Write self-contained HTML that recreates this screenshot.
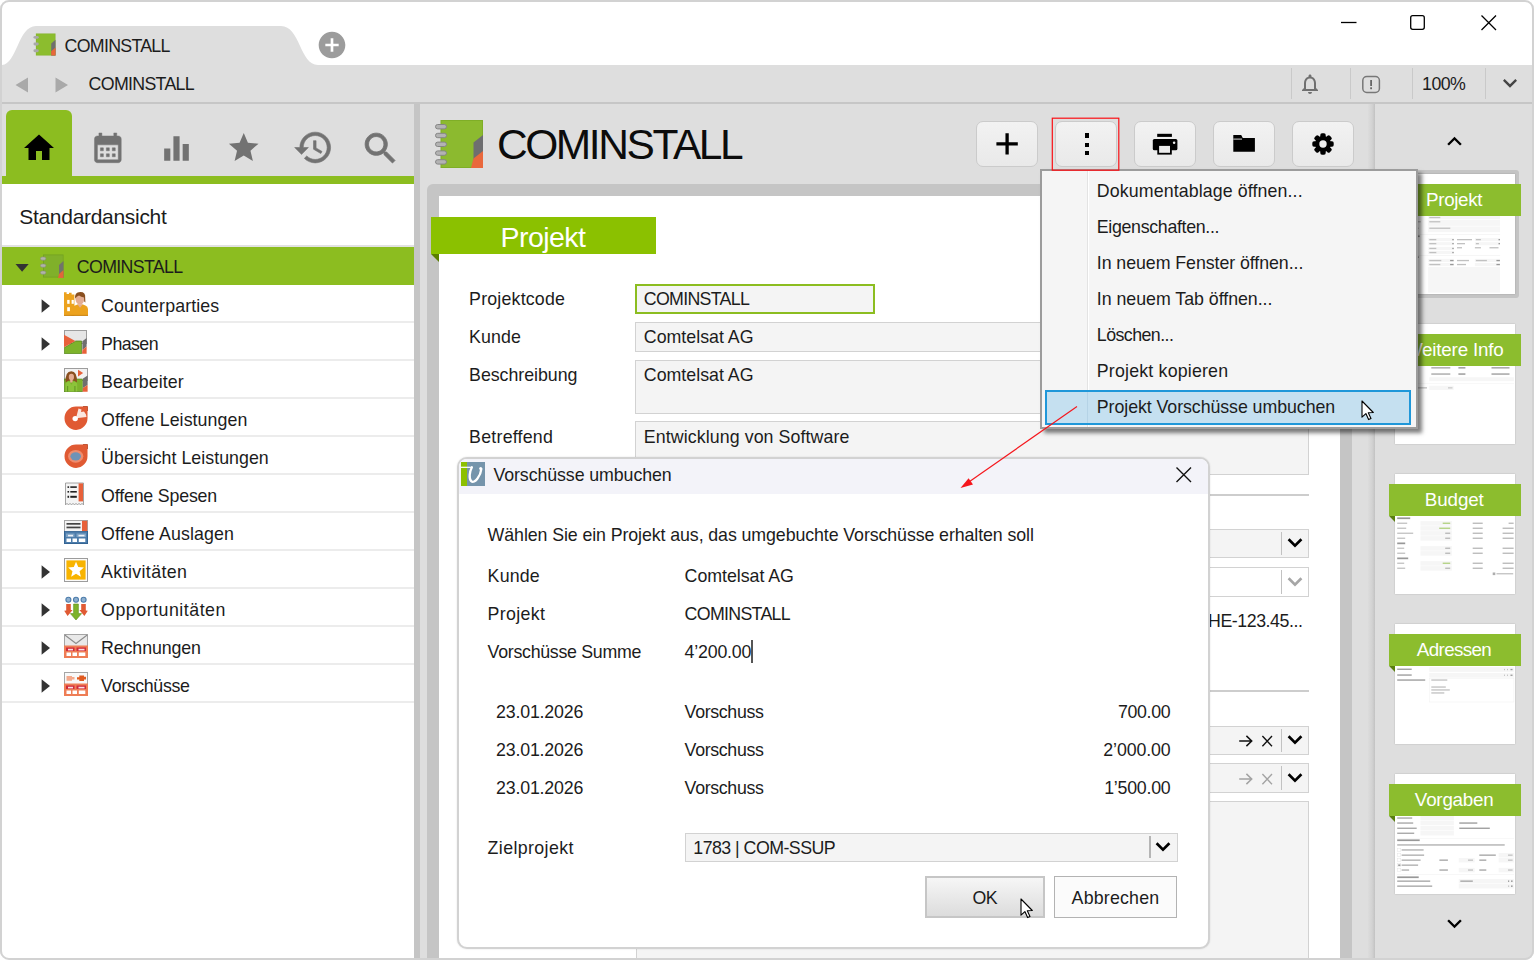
<!DOCTYPE html>
<html lang="de"><head><meta charset="utf-8"><title>COMINSTALL</title>
<style>
html,body{margin:0;padding:0;background:#fff;}
body{width:1534px;height:960px;overflow:hidden;position:relative;font-family:"Liberation Sans", sans-serif;}
#win{position:absolute;left:0;top:0;width:1534px;height:960px;overflow:hidden;}
#win div,#win span.t,#win svg{position:absolute;box-sizing:border-box;}
span.t{white-space:nowrap;font-kerning:normal;}

.fld{background:#f4f4f4;border:1px solid #d2d2d2;}
.sep{background:#ececec;}

</style></head><body><div id="win">
<div style="left:0px;top:0px;width:1534px;height:960px;background:#dedede;border-radius:9px;"></div><div style="left:0px;top:0px;width:1534px;height:65px;background:#fff;border-radius:9px 9px 0 0;"></div><svg style="left:0;top:0" width="400" height="70" viewBox="0 0 400 70"><path fill="#dedede" d="M0,65 L2,65 C17,64 18,26 36,26 L281,26 C300,26 300,65 318,65 L318,66 L0,66 Z"/></svg><svg style="left:33px;top:33px" width="23" height="23" viewBox="0 0 48 48">
<rect x="6" y="1" width="41" height="46" fill="#86b52b"/><rect x="7.5" y="2.5" width="38" height="43" fill="#8cbd2e"/>
<polygon points="47,14 38,22 38,47 47,47" fill="#6f6f6f"/><polygon points="47,30 38,38 38,47 47,47" fill="#e8673a"/>
<rect x="1" y="6" width="11" height="6" rx="3" fill="#a9a9a9"/><rect x="1" y="20" width="11" height="6" rx="3" fill="#a9a9a9"/><rect x="1" y="34" width="11" height="6" rx="3" fill="#a9a9a9"/>
</svg><span id="t0" class="t" style="left:64.61px;top:37.73px;font-size:17.8px;line-height:17.8px;color:#1c1c1c;letter-spacing:-0.726px;">COMINSTALL</span><svg style="left:315.8px;top:29.2px;" width="32" height="32" viewBox="0 0 24 24"><path fill="#9c9c9c" d="M12 2C6.48 2 2 6.48 2 12s4.48 10 10 10 10-4.48 10-10S17.52 2 12 2zm5 11h-4v4h-2v-4H7v-2h4V7h2v4h4v2z"/></svg><svg style="left:1330px;top:8px" width="180" height="30" viewBox="0 0 180 30" fill="none" stroke="#000" stroke-width="1.3"><path d="M11,14.5 H26.5"/><rect x="80.7" y="7.7" width="13.6" height="13.6" rx="2"/><path d="M151.5,7.5 L166,22 M166,7.5 L151.5,22"/></svg><svg style="left:10px;top:72px" width="70" height="26" viewBox="0 0 70 26"><path fill="#a9a9a9" d="M18,5.5 L18,20.5 L5.5,13 Z M45.5,5.5 L45.5,20.5 L58,13 Z"/></svg><span id="t1" class="t" style="left:88.61px;top:75.83px;font-size:17.8px;line-height:17.8px;color:#1c1c1c;letter-spacing:-0.693px;">COMINSTALL</span><div style="left:1291px;top:68px;width:1.3px;height:31px;background:#c9c9c9;"></div><div style="left:1350px;top:68px;width:1.3px;height:31px;background:#c9c9c9;"></div><div style="left:1412px;top:68px;width:1.3px;height:31px;background:#c9c9c9;"></div><div style="left:1485px;top:68px;width:1.3px;height:31px;background:#c9c9c9;"></div><svg style="left:1297.6px;top:72px;" width="24" height="24" viewBox="0 0 24 24"><path fill="#707070" d="M12 22c1.1 0 2-.9 2-2h-4c0 1.1.9 2 2 2zm6-6v-5c0-3.07-1.63-5.64-4.5-6.32V4c0-.83-.67-1.5-1.5-1.5s-1.5.67-1.5 1.5v.68C7.64 5.36 6 7.92 6 11v5l-2 2v1h16v-1l-2-2zm-2 1H8v-6c0-2.48 1.51-4.5 4-4.5s4 2.02 4 4.5v6z"/></svg><svg style="left:1360px;top:73px" width="22" height="22" viewBox="0 0 22 22"><rect x="2.8" y="3.5" width="16.6" height="16" rx="4" fill="none" stroke="#777" stroke-width="1.5"/><rect x="10.2" y="7" width="1.8" height="6" fill="#666"/><rect x="10.2" y="14.3" width="1.8" height="1.9" fill="#666"/></svg><span id="t2" class="t" style="left:1422.11px;top:76.13px;font-size:17.8px;line-height:17.8px;color:#1c1c1c;letter-spacing:-0.568px;">100%</span><svg style="left:1495.6px;top:69px;" width="28" height="28" viewBox="0 0 24 24"><path fill="#444" d="M7.41 8.59L12 13.17l4.59-4.58L18 10l-6 6-6-6 1.41-1.41z"/></svg><div style="left:0px;top:102px;width:1534px;height:2px;background:#c6c6c6;"></div><div style="left:2px;top:184px;width:412px;height:776px;background:#fff;"></div><div style="left:6px;top:110px;width:66px;height:70px;background:#8cbd20;border-radius:6px 6px 0 0;"></div><div style="left:2px;top:176px;width:412px;height:8px;background:#8cbd20;"></div><svg style="left:21px;top:130.2px;" width="36" height="36" viewBox="0 0 24 24"><path fill="#000" d="M10 20v-6h4v6h5v-8h3L12 3 2 12h3v8z"/></svg><svg style="left:90.3px;top:130px;stroke:#727272;stroke-width:.3;" width="35.7" height="35.7" viewBox="0 0 24 24"><path fill="#727272" d="M19 4h-1V2h-2v2H8V2H6v2H5c-1.11 0-1.99.9-1.99 2L3 20c0 1.1.89 2 2 2h14c1.1 0 2-.9 2-2V6c0-1.1-.9-2-2-2zm0 16H5V10h14v10zM9 14H7v-2h2v2zm4 0h-2v-2h2v2zm4 0h-2v-2h2v2zm-8 4H7v-2h2v2zm4 0h-2v-2h2v2zm4 0h-2v-2h2v2z"/></svg><svg style="left:157.5px;top:129.5px;" width="37" height="37" viewBox="0 0 24 24"><path fill="#727272" d="M10 20h4V4h-4v16zm-6 0h4v-8H4v8zM16 9v11h4V9h-4z"/></svg><svg style="left:226.3px;top:130.4px;" width="35.5" height="35.5" viewBox="0 0 24 24"><path fill="#727272" d="M12 17.27L18.18 21l-1.64-7.03L22 9.24l-7.19-.61L12 2 9.19 8.63 2 9.24l5.46 4.73L5.82 21z"/></svg><svg style="left:292.5px;top:127.1px;stroke:#727272;stroke-width:.35;" width="41" height="41" viewBox="0 0 24 24"><path fill="#727272" d="M13 3c-4.97 0-9 4.03-9 9H1l3.89 3.89.07.14L9 12H6c0-3.87 3.13-7 7-7s7 3.13 7 7-3.13 7-7 7c-1.93 0-3.68-.79-4.94-2.06l-1.42 1.42C8.27 19.99 10.51 21 13 21c4.97 0 9-4.03 9-9s-4.03-9-9-9zm-1 5v5l4.28 2.54.72-1.21-3.5-2.08V8H12z"/></svg><svg style="left:359.5px;top:128.4px;stroke:#727272;stroke-width:.5;" width="41" height="41" viewBox="0 0 24 24"><path fill="#727272" d="M15.5 14h-.79l-.28-.27C15.41 12.59 16 11.11 16 9.5 16 5.91 13.09 3 9.5 3S3 5.91 3 9.5 5.91 16 9.5 16c1.61 0 3.09-.59 4.23-1.57l.27.28v.79l5 4.99L20.49 19l-4.99-5zm-6 0C7.01 14 5 11.99 5 9.5S7.01 5 9.5 5 14 7.01 14 9.5 11.99 14 9.5 14z"/></svg><span id="t3" class="t" style="left:19.25px;top:206.42px;font-size:21px;line-height:21px;color:#1c1c1c;letter-spacing:-0.299px;">Standardansicht</span><div style="left:2px;top:245px;width:412px;height:2px;background:#e2e2e2;"></div><div style="left:2px;top:247px;width:412px;height:38px;background:#8cbd20;"></div><svg style="left:14px;top:262px" width="16" height="12" viewBox="0 0 16 12"><path fill="#333" d="M1.5,2 L14.7,2 L8.1,9.8 Z"/></svg><span id="t4" class="t" style="left:76.81px;top:259.33px;font-size:17.8px;line-height:17.8px;color:#1c1c1c;letter-spacing:-0.670px;">COMINSTALL</span><div class="sep" style="left:2px;top:321px;width:412px;height:2px;"></div><span id="t5" class="t" style="left:101.11px;top:297.93px;font-size:17.8px;line-height:17.8px;color:#1c1c1c;letter-spacing:0.111px;">Counterparties</span><svg style="left:40px;top:298px" width="12" height="16" viewBox="0 0 12 16"><path fill="#333" d="M1.6,1.3 L10,8 L1.6,14.7 Z"/></svg><div class="sep" style="left:2px;top:359px;width:412px;height:2px;"></div><span id="t6" class="t" style="left:101.11px;top:335.93px;font-size:17.8px;line-height:17.8px;color:#1c1c1c;letter-spacing:-0.566px;">Phasen</span><svg style="left:40px;top:336px" width="12" height="16" viewBox="0 0 12 16"><path fill="#333" d="M1.6,1.3 L10,8 L1.6,14.7 Z"/></svg><div class="sep" style="left:2px;top:397px;width:412px;height:2px;"></div><span id="t7" class="t" style="left:101.11px;top:373.93px;font-size:17.8px;line-height:17.8px;color:#1c1c1c;letter-spacing:0.048px;">Bearbeiter</span><div class="sep" style="left:2px;top:435px;width:412px;height:2px;"></div><span id="t8" class="t" style="left:101.11px;top:411.93px;font-size:17.8px;line-height:17.8px;color:#1c1c1c;letter-spacing:0.079px;">Offene Leistungen</span><div class="sep" style="left:2px;top:473px;width:412px;height:2px;"></div><span id="t9" class="t" style="left:101.11px;top:449.93px;font-size:17.8px;line-height:17.8px;color:#1c1c1c;letter-spacing:0.028px;">Übersicht Leistungen</span><div class="sep" style="left:2px;top:511px;width:412px;height:2px;"></div><span id="t10" class="t" style="left:101.11px;top:487.93px;font-size:17.8px;line-height:17.8px;color:#1c1c1c;letter-spacing:-0.186px;">Offene Spesen</span><div class="sep" style="left:2px;top:549px;width:412px;height:2px;"></div><span id="t11" class="t" style="left:101.11px;top:525.93px;font-size:17.8px;line-height:17.8px;color:#1c1c1c;letter-spacing:0.115px;">Offene Auslagen</span><div class="sep" style="left:2px;top:587px;width:412px;height:2px;"></div><span id="t12" class="t" style="left:101.11px;top:563.93px;font-size:17.8px;line-height:17.8px;color:#1c1c1c;letter-spacing:0.375px;">Aktivitäten</span><svg style="left:40px;top:564px" width="12" height="16" viewBox="0 0 12 16"><path fill="#333" d="M1.6,1.3 L10,8 L1.6,14.7 Z"/></svg><div class="sep" style="left:2px;top:625px;width:412px;height:2px;"></div><span id="t13" class="t" style="left:101.11px;top:601.93px;font-size:17.8px;line-height:17.8px;color:#1c1c1c;letter-spacing:0.511px;">Opportunitäten</span><svg style="left:40px;top:602px" width="12" height="16" viewBox="0 0 12 16"><path fill="#333" d="M1.6,1.3 L10,8 L1.6,14.7 Z"/></svg><div class="sep" style="left:2px;top:663px;width:412px;height:2px;"></div><span id="t14" class="t" style="left:101.11px;top:639.93px;font-size:17.8px;line-height:17.8px;color:#1c1c1c;letter-spacing:-0.120px;">Rechnungen</span><svg style="left:40px;top:640px" width="12" height="16" viewBox="0 0 12 16"><path fill="#333" d="M1.6,1.3 L10,8 L1.6,14.7 Z"/></svg><div class="sep" style="left:2px;top:701px;width:412px;height:2px;"></div><span id="t15" class="t" style="left:101.11px;top:677.93px;font-size:17.8px;line-height:17.8px;color:#1c1c1c;letter-spacing:-0.349px;">Vorschüsse</span><svg style="left:40px;top:678px" width="12" height="16" viewBox="0 0 12 16"><path fill="#333" d="M1.6,1.3 L10,8 L1.6,14.7 Z"/></svg><svg style="left:40px;top:254.2px;opacity:.93;" width="24" height="24" viewBox="0 0 24 24"><rect x="3" y="0.5" width="20.5" height="23" fill="#6f9e22"/><rect x="3.8" y="1.3" width="19" height="21.4" fill="#80b02b"/><polygon points="23.5,7 19,11 19,24 23.5,24" fill="#6f6f70"/><polygon points="23.5,16 19,20 18,24 23.5,24" fill="#e8613a"/><g fill="#b4b4b4" stroke="#8a8a8a" stroke-width=".6"><rect x=".4" y="3" width="5.4" height="3.2" rx="1.6"/><rect x=".4" y="10" width="5.4" height="3.2" rx="1.6"/><rect x=".4" y="17" width="5.4" height="3.2" rx="1.6"/></g></svg><svg style="left:64px;top:292px;" width="24" height="24" viewBox="0 0 24 24"><path d="M0,23.7 V0.3 H2.6 V1.9 H5 V0.8 H7.6 V2.4 H10.4 V23.7 Z" fill="#eca21e"/><rect x="3.2" y="7.9" width="2.4" height="3.9" fill="#fff"/><rect x="7.6" y="7.9" width="2.2" height="3.9" fill="#fff"/><rect x="3.2" y="15.2" width="2.7" height="4" fill="#fff"/><path d="M7.5,23.7 V17 Q7.8,14.2 11,13.6 L13.4,12.6 H19 L21.4,13.6 Q23.8,14.4 24,17 V23.7 Z" fill="#eca21e"/><ellipse cx="15.9" cy="7.3" rx="4.4" ry="5.3" fill="#e4ad93"/><path d="M13.2,12 L16,15.8 L19,12 Q16,13.6 13.2,12Z" fill="#e4ad93"/><path d="M11.2,6.8 Q10.2,0.2 16.2,0.1 Q21.8,0 21.2,6 L21.4,10.5 L20.2,9.5 L20,5.6 Q17,4.6 15,3.4 Q12.3,4.2 11.2,6.8Z" fill="#8a4f1f"/><path d="M0,23.4 H24" stroke="#c27a0c" stroke-width=".8"/></svg><svg style="left:64px;top:330px;" width="24" height="24" viewBox="0 0 24 24"><rect x=".5" y=".5" width="22" height="13" fill="#e6e6e6" stroke="#9d9d9d"/><polygon points="0.3,17.6 11.8,11 17.6,11 17.6,23.7 0.3,23.7" fill="#7db32b" stroke="#4f7f17" stroke-width=".7"/><polygon points="0,4.8 11.3,11 0,17.2" fill="#e8613a"/><polygon points="18.4,11.2 22.6,8 22.6,16.6 18.4,20" fill="#6f6f70"/><polygon points="18.4,20 22.6,16.6 22.6,23.8 18,23.8" fill="#e8613a"/></svg><svg style="left:64px;top:368px;" width="24" height="24" viewBox="0 0 24 24"><rect x=".5" y=".5" width="23" height="12" fill="#f2f2f2" stroke="#9d9d9d"/><polygon points="14,1.7 19.2,5.1 14,8.5" fill="#e8613a"/><rect x="0.3" y="11" width="18" height="12.7" fill="#7db32b" stroke="#4f7f17" stroke-width=".6"/><polygon points="19,10.5 23.6,7.6 23.6,17 19,20" fill="#6f6f70"/><polygon points="19,20 23.6,17 23.6,23.8 18.6,23.8" fill="#e8613a"/><path d="M1.6,14.5 Q1,3.2 7.3,3.2 Q13.4,3.2 12.9,14.5 Q10,12 7.3,12.6 Q4.5,12 1.6,14.5Z" fill="#8a4f1f"/><ellipse cx="7.4" cy="9" rx="2.6" ry="3.3" fill="#e4ad93"/><rect x="6.2" y="11.5" width="2.4" height="3" fill="#e4ad93"/><path d="M1.5,23.5 V16.6 Q1.8,14 5.2,13.6 L7.4,16.8 L9.6,13.6 Q13,14 13.2,16.6 V23.5 Z" fill="#8cc43a"/><rect x="3.4" y="18" width=".7" height="5.6" fill="#4f7f17"/><rect x="10.6" y="18" width=".7" height="5.6" fill="#4f7f17"/></svg><svg style="left:64px;top:406px;" width="24" height="24" viewBox="0 0 24 24"><path d="M12,.5 H23.5 V12 A11.5,11.7 0 1 1 12,.5Z" fill="#e05a33"/><path d="M12,12.2 L14.5,2.5 L17.5,3.5 L17,6 L20,5.5 L22,8.5 L22.5,11 Z" fill="#fbe6de"/><circle cx="11.2" cy="12.6" r="2.7" fill="#fff"/><path d="M19,.5 H23.5 V5" fill="none" stroke="#b6401d" stroke-width=".8"/></svg><svg style="left:64px;top:444px;" width="24" height="24" viewBox="0 0 24 24"><path d="M12,.5 H23.5 V12 A11.5,11.7 0 1 1 12,.5Z" fill="#e05a33"/><ellipse cx="11.7" cy="12.3" rx="7.6" ry="6.4" fill="#ef8c6d"/><ellipse cx="11.7" cy="12.3" rx="5.3" ry="4.1" fill="#6f93b6"/><path d="M19,.5 H23.5 V5" fill="none" stroke="#b6401d" stroke-width=".8"/></svg><svg style="left:64px;top:482px;" width="24" height="24" viewBox="0 0 24 24"><path d="M1.5,1 H19.5 V23 L18,21.3 L16.5,23 L15,21.3 L13.5,23 L12,21.3 L10.5,23 L9,21.3 L7.5,23 L6,21.3 L4.5,23 L3,21.3 L1.5,23 Z" fill="#f4f4f4" stroke="#9a9a9a" stroke-width=".9"/><rect x="14.6" y="1.4" width="4.4" height="18" fill="#e8613a"/><g fill="#222"><rect x="3.5" y="4.3" width="1.6" height="1.6"/><rect x="6.3" y="4.3" width="6.5" height="1.6"/><rect x="3.5" y="9" width="1.6" height="1.6"/><rect x="6.3" y="9" width="6.5" height="1.6"/><rect x="3.5" y="13.8" width="1.6" height="2"/><rect x="6.3" y="13.8" width="6.5" height="2"/></g></svg><svg style="left:64px;top:520px;" width="24" height="24" viewBox="0 0 24 24"><rect x=".5" y=".5" width="23" height="12" fill="#f4f4f4" stroke="#a5a5a5"/><rect x="18" y=".8" width="5.2" height="10.5" fill="#e8613a"/><rect x="2.5" y="3" width="14" height="1.7" fill="#444"/><rect x="2.5" y="6.6" width="14" height="1.7" fill="#444"/><rect x="0" y="11.5" width="24" height="12.5" fill="#4c7cab"/><rect x="2" y="13.5" width="8.5" height="3.5" fill="#7ea3c6"/><rect x="12.5" y="13.5" width="9.5" height="3.5" fill="#7ea3c6"/><rect x="4" y="14.8" width="5" height="1.6" fill="#fff" opacity=".85"/><rect x="14.5" y="14.8" width="6" height="1.6" fill="#fff" opacity=".85"/><rect x="2.5" y="18.5" width="4.5" height="3.5" fill="#fff"/><rect x="8.5" y="18.5" width="4.5" height="3.5" fill="#fff"/><rect x="14.8" y="18.5" width="6.5" height="3.5" fill="#fff"/><rect x=".4" y="11.5" width="23.2" height="12.1" fill="none" stroke="#2f5f8f" stroke-width=".8"/></svg><svg style="left:64px;top:558px;" width="24" height="24" viewBox="0 0 24 24"><rect x=".5" y=".5" width="23" height="23" fill="#fafafa" stroke="#9c9c9c"/><rect x="2.4" y="2.4" width="19.2" height="19.2" fill="#f8b400"/><path transform="translate(2.6,2.2) scale(.785)" fill="#fff" d="M12 17.27L18.18 21l-1.64-7.03L22 9.24l-7.19-.61L12 2 9.19 8.63 2 9.24l5.46 4.73L5.82 21z"/></svg><svg style="left:64px;top:596px;" width="24" height="24" viewBox="0 0 24 24"><g fill="#8fb0cf" stroke="#4c7cab" stroke-width="1.1"><circle cx="4.4" cy="3.8" r="2.5"/><circle cx="12" cy="3.8" r="2.5"/><circle cx="19.6" cy="3.8" r="2.5"/></g><path d="M2.2,8 H6.8 V14 H8.6 L3.6,20 L.2,14.8 L2.2,14.5 Z" fill="#e05a33"/><path d="M21.8,8 H17.2 V14 H15.4 L20.4,20 L23.8,14.8 L21.8,14.5 Z" fill="#e05a33"/><path d="M9.6,8 H14.4 V17.6 H17.6 L12,24 L6.4,17.6 H9.6 Z" fill="#7db32b" stroke="#5f8f1c" stroke-width=".6"/></svg><svg style="left:64px;top:634px;" width="24" height="24" viewBox="0 0 24 24"><rect x=".5" y=".5" width="23" height="12" fill="#e9e9e9" stroke="#a5a5a5"/><path d="M.8,1 L12,9.5 L23.2,1" fill="none" stroke="#8c8c8c" stroke-width="1.1"/><rect x="0" y="11.5" width="24" height="12.5" fill="#ee7d55"/><rect x="2" y="13.5" width="8.5" height="3.5" fill="#d12a3a"/><rect x="12.5" y="13.5" width="9.5" height="3.5" fill="#d12a3a"/><rect x="4" y="14.8" width="5" height="1.6" fill="#fff" opacity=".85"/><rect x="14.5" y="14.8" width="6" height="1.6" fill="#fff" opacity=".85"/><rect x="2.5" y="18.5" width="4.5" height="3.5" fill="#fff"/><rect x="8.5" y="18.5" width="4.5" height="3.5" fill="#fff"/><rect x="14.8" y="18.5" width="6.5" height="3.5" fill="#fff"/></svg><svg style="left:64px;top:672px;" width="24" height="24" viewBox="0 0 24 24"><rect x=".5" y=".5" width="23" height="12" fill="#f8f8f8" stroke="#a5a5a5"/><path d="M2.5,4 H8 V5 H10.5 V7.5 H8 V8.7 H2.5 Z" fill="#f3a98c"/><path d="M13,5.3 H15.3 V3.6 H20 V4.8 H22 V7.6 H20 V8.9 H15.3 V7.4 H13 Z" fill="#e05a1f"/><rect x="0" y="11.5" width="24" height="12.5" fill="#ee7d55"/><rect x="2" y="13.5" width="8.5" height="3.5" fill="#d12a3a"/><rect x="12.5" y="13.5" width="9.5" height="3.5" fill="#d12a3a"/><rect x="4" y="14.8" width="5" height="1.6" fill="#fff" opacity=".85"/><rect x="14.5" y="14.8" width="6" height="1.6" fill="#fff" opacity=".85"/><rect x="2.5" y="18.5" width="4.5" height="3.5" fill="#fff"/><rect x="8.5" y="18.5" width="4.5" height="3.5" fill="#fff"/><rect x="14.8" y="18.5" width="6.5" height="3.5" fill="#fff"/></svg><div style="left:414px;top:104px;width:6px;height:856px;background:#c5c5c5;"></div><svg style="left:434px;top:119px" width="50" height="50" viewBox="0 0 50 50">
<rect x="6.5" y="1" width="42.5" height="48" fill="#7fae27"/><rect x="7.5" y="2" width="40.5" height="46" fill="#8cba2f"/>
<polygon points="49,16 39.5,23.5 39.5,49 49,49" fill="#6e6e70"/><polygon points="49,32 39.5,39.5 37,49 49,49" fill="#e9683c"/>
<g fill="#b3b3b3" stroke="#858585" stroke-width="1"><rect x="1.5" y="5.5" width="11" height="4.4" rx="2.2"/><rect x="1.5" y="14.3" width="11" height="4.4" rx="2.2"/><rect x="1.5" y="23.1" width="11" height="4.4" rx="2.2"/><rect x="1.5" y="31.9" width="11" height="4.4" rx="2.2"/><rect x="1.5" y="40.7" width="11" height="4.4" rx="2.2"/></g>
</svg><span id="t16" class="t" style="left:496.88px;top:124.32px;font-size:42.5px;line-height:42.5px;color:#0c0c0c;letter-spacing:-2.399px;">COMINSTALL</span><div style="left:975.6px;top:120.6px;width:62.6px;height:46.4px;background:linear-gradient(#f2f2f2,#e9e9e9);border:1.5px solid #cbcbcb;border-radius:7px;"></div><div style="left:1054.6px;top:120.6px;width:62.6px;height:46.4px;background:linear-gradient(#f2f2f2,#e9e9e9);border:1.5px solid #cbcbcb;border-radius:7px;"></div><div style="left:1133.6px;top:120.6px;width:62.6px;height:46.4px;background:linear-gradient(#f2f2f2,#e9e9e9);border:1.5px solid #cbcbcb;border-radius:7px;"></div><div style="left:1212.6px;top:120.6px;width:62.6px;height:46.4px;background:linear-gradient(#f2f2f2,#e9e9e9);border:1.5px solid #cbcbcb;border-radius:7px;"></div><div style="left:1291.6px;top:120.6px;width:62.6px;height:46.4px;background:linear-gradient(#f2f2f2,#e9e9e9);border:1.5px solid #cbcbcb;border-radius:7px;"></div><svg style="left:990px;top:127px" width="34" height="34" viewBox="0 0 34 34"><path d="M6.4,16.9 H27.8 M17.1,6.2 V27.6" stroke="#000" stroke-width="3.3" fill="none"/></svg><div style="left:1084.8px;top:133.2px;width:4.5px;height:4.4px;background:#000;"></div><div style="left:1084.8px;top:142.8px;width:4.5px;height:4.4px;background:#000;"></div><div style="left:1084.8px;top:151px;width:4.5px;height:4.4px;background:#000;"></div><svg style="left:1150px;top:130px" width="30" height="28" viewBox="0 0 30 28"><rect x="7.2" y="3.8" width="14.7" height="3.1"/><rect x="2.8" y="9" width="24.6" height="11.3" rx="1.6"/><rect x="7.3" y="14.2" width="14.5" height="10.4"/><rect x="9.1" y="15.9" width="10.9" height="6.9" fill="#ededed"/><circle cx="24.1" cy="12.8" r="1.25" fill="#ededed"/></svg><svg style="left:1230px;top:132px" width="28" height="22" viewBox="0 0 28 22"><path d="M3.3,3 H11.2 L12.8,5.9 H24.9 V19.8 H3.3 Z"/><path d="M3.3,7.1 H12" stroke="#ededed" stroke-width=".9"/></svg><svg style="left:1311px;top:132px" width="24" height="24" viewBox="-12 -12 24 24"><rect x="-2.7" y="-10.7" width="5.4" height="7" rx="1.7" transform="rotate(0)"/><rect x="-2.7" y="-10.7" width="5.4" height="7" rx="1.7" transform="rotate(45)"/><rect x="-2.7" y="-10.7" width="5.4" height="7" rx="1.7" transform="rotate(90)"/><rect x="-2.7" y="-10.7" width="5.4" height="7" rx="1.7" transform="rotate(135)"/><rect x="-2.7" y="-10.7" width="5.4" height="7" rx="1.7" transform="rotate(180)"/><rect x="-2.7" y="-10.7" width="5.4" height="7" rx="1.7" transform="rotate(225)"/><rect x="-2.7" y="-10.7" width="5.4" height="7" rx="1.7" transform="rotate(270)"/><rect x="-2.7" y="-10.7" width="5.4" height="7" rx="1.7" transform="rotate(315)"/><circle r="7.9"/><circle r="3.7" fill="#ededed"/></svg><div style="left:427px;top:184px;width:925px;height:776px;background:#c5c5c5;border-radius:6px 0 0 0;"></div><div style="left:439px;top:196px;width:901px;height:764px;background:#fff;"></div><div style="left:1368px;top:104px;width:7px;height:856px;background:linear-gradient(90deg,#dcdcdc 0,#d2d2d2 60%,#c2c2c2 100%);"></div><div style="left:431.4px;top:217px;width:224.8px;height:37px;background:#8bc100;"></div><svg style="left:431px;top:254px" width="8" height="8" viewBox="0 0 8 8"><path fill="#5a7f00" d="M0,0 H8 V8 Z"/></svg><span id="t17" class="t" style="left:500.57px;top:223.17px;font-size:28.5px;line-height:28.5px;color:#fff;letter-spacing:-0.576px;">Projekt</span><span id="t18" class="t" style="left:469.11px;top:291.33px;font-size:17.8px;line-height:17.8px;color:#1c1c1c;letter-spacing:0.187px;">Projektcode</span><span id="t19" class="t" style="left:469.11px;top:329.43px;font-size:17.8px;line-height:17.8px;color:#1c1c1c;letter-spacing:0.090px;">Kunde</span><span id="t20" class="t" style="left:469.11px;top:367.33px;font-size:17.8px;line-height:17.8px;color:#1c1c1c;letter-spacing:-0.043px;">Beschreibung</span><span id="t21" class="t" style="left:469.11px;top:428.63px;font-size:17.8px;line-height:17.8px;color:#1c1c1c;letter-spacing:0.227px;">Betreffend</span><div style="left:635px;top:284px;width:240px;height:30px;background:#f4f4f4;border:2px solid #8cbd20;"></div><div class="fld" style="left:635px;top:322px;width:674px;height:30px;"></div><div class="fld" style="left:635px;top:360px;width:674px;height:54px;"></div><div class="fld" style="left:635px;top:421px;width:674px;height:53.6px;"></div><span id="t22" class="t" style="left:643.81px;top:291.33px;font-size:17.8px;line-height:17.8px;color:#1c1c1c;letter-spacing:-0.693px;">COMINSTALL</span><span id="t23" class="t" style="left:643.81px;top:329.43px;font-size:17.8px;line-height:17.8px;color:#1c1c1c;letter-spacing:0.007px;">Comtelsat AG</span><span id="t24" class="t" style="left:643.81px;top:367.33px;font-size:17.8px;line-height:17.8px;color:#1c1c1c;letter-spacing:0.007px;">Comtelsat AG</span><span id="t25" class="t" style="left:643.81px;top:428.63px;font-size:17.8px;line-height:17.8px;color:#1c1c1c;letter-spacing:0.086px;">Entwicklung von Software</span><div style="left:470px;top:494.2px;width:839px;height:1.7px;background:#cdcdcd;"></div><div style="left:470px;top:690.2px;width:839px;height:1.7px;background:#cdcdcd;"></div><div class="fld" style="left:1073px;top:529.3px;width:236px;height:29px;"></div><div style="left:1280.5px;top:532.3px;width:1.5px;height:23px;background:#c2c2c2;"></div><svg style="left:1285.5px;top:536.4px" width="18" height="14" viewBox="0 0 18 14"><path d="M2.6,3.2 L9,9.6 L15.4,3.2" fill="none" stroke="#000" stroke-width="2.7" stroke-linejoin="miter"/></svg><div class="fld" style="left:1073px;top:567.3px;width:236px;height:29.5px;background:#fff;"></div><div style="left:1280.5px;top:570.3px;width:1.5px;height:23.5px;background:#c2c2c2;"></div><svg style="left:1285.5px;top:574.65px" width="18" height="14" viewBox="0 0 18 14"><path d="M2.6,3.2 L9,9.6 L15.4,3.2" fill="none" stroke="#a6a6a6" stroke-width="2.7" stroke-linejoin="miter"/></svg><span id="t26" class="t" style="left:1195.61px;top:612.63px;font-size:17.8px;line-height:17.8px;color:#1c1c1c;letter-spacing:-0.449px;">CHE-123.45...</span><div class="fld" style="left:1073px;top:725.5px;width:236px;height:29.2px;"></div><div style="left:1280.5px;top:728.5px;width:1.5px;height:23.2px;background:#c2c2c2;"></div><svg style="left:1285.5px;top:732.7px" width="18" height="14" viewBox="0 0 18 14"><path d="M2.6,3.2 L9,9.6 L15.4,3.2" fill="none" stroke="#000" stroke-width="2.7" stroke-linejoin="miter"/></svg><svg style="left:1236px;top:732.6px" width="40" height="16" viewBox="0 0 40 16" fill="none" stroke="#111" stroke-width="1.5"><path d="M3.2,8 H15.6 M10.4,2.9 L15.7,8 L10.4,13.1"/><path d="M26.4,3 L36,13.3 M36,3 L26.4,13.3" stroke-width="1.35"/></svg><div class="fld" style="left:1073px;top:763.4px;width:236px;height:29.2px;"></div><div style="left:1280.5px;top:766.4px;width:1.5px;height:23.2px;background:#c2c2c2;"></div><svg style="left:1285.5px;top:770.6px" width="18" height="14" viewBox="0 0 18 14"><path d="M2.6,3.2 L9,9.6 L15.4,3.2" fill="none" stroke="#000" stroke-width="2.7" stroke-linejoin="miter"/></svg><svg style="left:1236px;top:770.5px" width="40" height="16" viewBox="0 0 40 16" fill="none" stroke="#a3a3a3" stroke-width="1.5"><path d="M3.2,8 H15.6 M10.4,2.9 L15.7,8 L10.4,13.1"/><path d="M26.4,3 L36,13.3 M36,3 L26.4,13.3" stroke-width="1.35"/></svg><div class="fld" style="left:636px;top:801.4px;width:673px;height:170px;"></div><svg style="left:1439.5px;top:127px;" width="29" height="29" viewBox="0 0 24 24"><path fill="#000" d="M7.41 15.41L12 10.83l4.59 4.58L18 14l-6-6-6 6z"/></svg><svg style="left:1439.5px;top:909.2px;" width="29" height="29" viewBox="0 0 24 24"><path fill="#000" d="M7.41 8.59L12 13.17l4.59-4.58L18 10l-6 6-6-6 1.41-1.41z"/></svg><div style="left:1391px;top:170px;width:128px;height:128px;background:#c4c4c4;border-radius:3px;"></div><div style="left:1395px;top:174px;width:120px;height:120px;background:#fff;box-shadow:0 0 1.5px rgba(0,0,0,.22);"></div><svg style="left:1395px;top:174px;overflow:hidden;opacity:.6" width="120" height="120" viewBox="0 0 120 120"><rect x="33.2" y="42.0" width="71.8" height="3.2" fill="#f1f1f1"/><rect x="33.2" y="46.0" width="71.8" height="5.8" fill="#f1f1f1"/><rect x="33.2" y="52.5" width="71.8" height="5.6" fill="#f1f1f1"/><rect x="34.3" y="42.9" width="11.0" height="1.3" fill="#999"/><rect x="34.3" y="47.1" width="11.0" height="1.3" fill="#999"/><rect x="34.3" y="53.6" width="21.0" height="1.3" fill="#999"/><rect x="15.7" y="42.9" width="5.0" height="1.3" fill="#999"/><rect x="15.7" y="47.1" width="10.0" height="1.3" fill="#999"/><rect x="15.7" y="53.6" width="8.0" height="1.3" fill="#999"/><rect x="15.7" y="60.3" width="89.4" height="0.3" fill="#d0d0d0"/><rect x="15.7" y="81.2" width="89.4" height="0.3" fill="#d0d0d0"/><rect x="15.7" y="61.4" width="9.0" height="1.7" fill="#555"/><rect x="15.7" y="82.3" width="8.0" height="1.7" fill="#555"/><rect x="33.2" y="64.0" width="25.6" height="3.1" fill="#f1f1f1"/><rect x="34.3" y="65.0" width="7.0" height="1.3" fill="#999"/><rect x="15.7" y="65.0" width="6.0" height="1.3" fill="#999"/><rect x="57.4" y="65.0" width="1.2" height="1.3" fill="#333"/><rect x="33.2" y="68.1" width="25.6" height="3.1" fill="#f1f1f1"/><rect x="34.3" y="69.0" width="7.0" height="1.3" fill="#999"/><rect x="15.7" y="69.0" width="6.0" height="1.3" fill="#999"/><rect x="57.4" y="69.0" width="1.2" height="1.3" fill="#333"/><rect x="33.2" y="72.9" width="25.6" height="3.1" fill="#f1f1f1"/><rect x="34.3" y="73.8" width="7.0" height="1.3" fill="#999"/><rect x="15.7" y="73.8" width="6.0" height="1.3" fill="#999"/><rect x="57.4" y="73.8" width="1.2" height="1.3" fill="#333"/><rect x="33.2" y="76.9" width="25.6" height="3.1" fill="#f1f1f1"/><rect x="34.3" y="77.9" width="7.0" height="1.3" fill="#999"/><rect x="15.7" y="77.9" width="6.0" height="1.3" fill="#999"/><rect x="57.4" y="77.9" width="1.2" height="1.3" fill="#333"/><rect x="79.9" y="64.0" width="25.1" height="3.1" fill="#f1f1f1"/><rect x="62.0" y="65.0" width="15.0" height="1.3" fill="#999"/><rect x="80.9" y="65.0" width="5.0" height="1.3" fill="#999"/><rect x="103.6" y="65.0" width="1.2" height="1.3" fill="#333"/><rect x="79.9" y="68.1" width="25.1" height="3.1" fill="#f1f1f1"/><rect x="62.0" y="69.0" width="8.0" height="1.3" fill="#999"/><rect x="80.9" y="69.0" width="3.0" height="1.3" fill="#999"/><rect x="103.6" y="69.0" width="1.2" height="1.3" fill="#333"/><rect x="62.0" y="73.1" width="5.0" height="1.3" fill="#999"/><rect x="79.9" y="73.1" width="6.0" height="1.3" fill="#999"/><rect x="94.5" y="73.1" width="9.0" height="1.3" fill="#999"/><rect x="33.2" y="84.9" width="25.6" height="3.1" fill="#f1f1f1"/><rect x="34.3" y="85.9" width="12.0" height="1.3" fill="#999"/><rect x="15.7" y="85.9" width="7.0" height="1.3" fill="#999"/><rect x="55.1" y="85.9" width="3.5" height="1.3" fill="#555"/><rect x="79.9" y="84.9" width="25.1" height="3.1" fill="#f1f1f1"/><rect x="62.0" y="85.9" width="12.0" height="1.3" fill="#999"/><rect x="101.4" y="85.9" width="3.5" height="1.3" fill="#555"/><rect x="33.2" y="89.0" width="25.6" height="3.1" fill="#f1f1f1"/><rect x="34.3" y="89.9" width="11.0" height="1.3" fill="#999"/><rect x="15.7" y="89.9" width="7.0" height="1.3" fill="#999"/><rect x="55.1" y="89.9" width="3.5" height="1.3" fill="#555"/><rect x="79.9" y="89.0" width="25.1" height="3.1" fill="#f1f1f1"/><rect x="62.0" y="89.9" width="9.0" height="1.3" fill="#999"/><rect x="101.4" y="89.9" width="3.5" height="1.3" fill="#555"/><rect x="80.9" y="85.9" width="11.0" height="1.3" fill="#999"/><rect x="33.2" y="93.0" width="71.8" height="25.6" fill="#f1f1f1"/><rect x="15.7" y="93.8" width="6.0" height="1.3" fill="#999"/></svg><div style="left:1395px;top:324px;width:120px;height:120px;background:#fff;box-shadow:0 0 1.5px rgba(0,0,0,.22);"></div><svg style="left:1395px;top:324px;overflow:hidden;opacity:.6" width="120" height="120" viewBox="0 0 120 120"><rect x="36.3" y="43.2" width="19.0" height="1.3" fill="#666"/><rect x="63.4" y="43.2" width="7.0" height="1.3" fill="#444"/><rect x="96.5" y="43.2" width="18.0" height="1.3" fill="#555"/><rect x="36.3" y="49.4" width="19.0" height="1.3" fill="#666"/><rect x="63.4" y="49.4" width="7.0" height="1.3" fill="#444"/><rect x="96.5" y="49.4" width="18.0" height="1.3" fill="#555"/><rect x="34.3" y="53.3" width="84.6" height="3.8" fill="#f1f1f1"/><rect x="2.0" y="59.6" width="117.0" height="0.3" fill="#d8d8d8"/><rect x="34.3" y="61.8" width="24.3" height="4.2" fill="#f1f1f1"/><rect x="22.0" y="63.2" width="10.0" height="1.3" fill="#999"/><rect x="53.0" y="63.2" width="4.5" height="1.3" fill="#aaa"/></svg><div style="left:1395px;top:474px;width:120px;height:120px;background:#fff;box-shadow:0 0 1.5px rgba(0,0,0,.22);"></div><svg style="left:1395px;top:474px;overflow:hidden;opacity:.6" width="120" height="120" viewBox="0 0 120 120"><rect x="2.2" y="43.4" width="13.0" height="1.7" fill="#555"/><rect x="2.2" y="48.6" width="10.0" height="1.3" fill="#999"/><rect x="25.5" y="47.1" width="31.4" height="4.5" fill="#f1f1f1"/><rect x="47.7" y="48.6" width="7.5" height="1.3" fill="#7db32b"/><rect x="77.7" y="48.6" width="10.0" height="1.3" fill="#888"/><rect x="113.6" y="48.6" width="5.0" height="1.3" fill="#888"/><rect x="2.2" y="53.6" width="9.0" height="1.3" fill="#999"/><rect x="25.5" y="52.1" width="31.4" height="4.5" fill="#f1f1f1"/><rect x="44.2" y="53.6" width="11.0" height="1.3" fill="#7db32b"/><rect x="77.7" y="53.6" width="10.0" height="1.3" fill="#888"/><rect x="107.6" y="53.6" width="11.0" height="1.3" fill="#888"/><rect x="2.2" y="58.6" width="16.0" height="1.3" fill="#999"/><rect x="25.5" y="57.1" width="31.4" height="4.5" fill="#f1f1f1"/><rect x="50.2" y="58.6" width="5.0" height="1.3" fill="#888"/><rect x="77.7" y="58.6" width="10.0" height="1.3" fill="#888"/><rect x="107.6" y="58.6" width="11.0" height="1.3" fill="#888"/><rect x="2.2" y="63.6" width="8.0" height="1.3" fill="#999"/><rect x="25.5" y="62.1" width="31.4" height="4.5" fill="#f1f1f1"/><rect x="50.2" y="63.6" width="5.0" height="1.3" fill="#888"/><rect x="77.7" y="63.6" width="10.0" height="1.3" fill="#888"/><rect x="107.6" y="63.6" width="11.0" height="1.3" fill="#888"/><rect x="2.2" y="68.5" width="8.0" height="1.7" fill="#555"/><rect x="2.2" y="73.6" width="7.0" height="1.3" fill="#999"/><rect x="25.5" y="72.1" width="31.4" height="4.5" fill="#f1f1f1"/><rect x="50.2" y="73.6" width="5.0" height="1.3" fill="#888"/><rect x="77.7" y="73.6" width="10.0" height="1.3" fill="#888"/><rect x="107.6" y="73.6" width="11.0" height="1.3" fill="#888"/><rect x="2.2" y="78.6" width="8.0" height="1.3" fill="#999"/><rect x="25.5" y="77.1" width="31.4" height="4.5" fill="#f1f1f1"/><rect x="50.2" y="78.6" width="5.0" height="1.3" fill="#888"/><rect x="77.7" y="78.6" width="10.0" height="1.3" fill="#888"/><rect x="107.6" y="78.6" width="11.0" height="1.3" fill="#888"/><rect x="2.2" y="83.5" width="11.0" height="1.7" fill="#555"/><rect x="2.2" y="88.6" width="7.0" height="1.3" fill="#999"/><rect x="25.5" y="87.1" width="31.4" height="4.5" fill="#f1f1f1"/><rect x="47.7" y="88.6" width="7.5" height="1.3" fill="#7db32b"/><rect x="77.7" y="88.6" width="10.0" height="1.3" fill="#888"/><rect x="107.6" y="88.6" width="11.0" height="1.3" fill="#888"/><rect x="2.2" y="93.6" width="8.0" height="1.3" fill="#999"/><rect x="25.5" y="92.1" width="31.4" height="4.5" fill="#f1f1f1"/><rect x="50.2" y="93.6" width="5.0" height="1.3" fill="#888"/><rect x="77.7" y="93.6" width="10.0" height="1.3" fill="#888"/><rect x="107.6" y="93.6" width="11.0" height="1.3" fill="#888"/><rect x="97.7" y="98.5" width="2.6" height="2.6" fill="#777"/><rect x="101.5" y="99.1" width="16.7" height="1.3" fill="#999"/></svg><div style="left:1395px;top:624px;width:120px;height:120px;background:#fff;box-shadow:0 0 1.5px rgba(0,0,0,.22);"></div><svg style="left:1395px;top:624px;overflow:hidden;opacity:.6" width="120" height="120" viewBox="0 0 120 120"><rect x="34.3" y="43.2" width="84.6" height="4.6" fill="#f1f1f1"/><rect x="34.3" y="49.0" width="84.6" height="4.6" fill="#f1f1f1"/><rect x="2.2" y="44.6" width="14.5" height="1.3" fill="#555"/><rect x="2.2" y="50.4" width="14.5" height="1.3" fill="#555"/><rect x="2.2" y="55.4" width="28.0" height="1.3" fill="#555"/><rect x="109.0" y="44.9" width="1.0" height="1.3" fill="#999"/><rect x="112.0" y="44.9" width="1.0" height="1.3" fill="#999"/><rect x="115.5" y="44.9" width="2.0" height="1.3" fill="#555"/><rect x="109.0" y="50.6" width="1.0" height="1.3" fill="#999"/><rect x="112.0" y="50.6" width="1.0" height="1.3" fill="#999"/><rect x="115.5" y="50.6" width="2.0" height="1.3" fill="#555"/><rect x="34.3" y="54.6" width="84.6" height="23.4" fill="#fff" stroke="#e4e4e4" stroke-width=".4"/><rect x="36.3" y="55.4" width="16.0" height="1.3" fill="#999"/><rect x="36.3" y="62.4" width="14.5" height="1.3" fill="#999"/><rect x="36.3" y="65.3" width="18.5" height="1.3" fill="#999"/><rect x="36.3" y="68.3" width="13.0" height="1.3" fill="#999"/></svg><div style="left:1395px;top:774px;width:120px;height:120px;background:#fff;box-shadow:0 0 1.5px rgba(0,0,0,.22);"></div><svg style="left:1395px;top:774px;overflow:hidden;opacity:.6" width="120" height="120" viewBox="0 0 120 120"><rect x="2.2" y="43.4" width="15.0" height="1.3" fill="#666"/><rect x="25.5" y="41.8" width="33.4" height="4.4" fill="#f1f1f1"/><rect x="2.2" y="48.4" width="16.0" height="1.3" fill="#666"/><rect x="25.5" y="46.8" width="33.4" height="4.4" fill="#f1f1f1"/><rect x="2.2" y="53.6" width="19.5" height="1.3" fill="#666"/><rect x="25.5" y="52.0" width="33.4" height="4.4" fill="#f1f1f1"/><rect x="2.2" y="58.6" width="17.0" height="1.3" fill="#666"/><rect x="25.5" y="57.0" width="33.4" height="4.4" fill="#f1f1f1"/><rect x="64.3" y="48.4" width="18.0" height="1.3" fill="#555"/><rect x="64.3" y="53.6" width="30.5" height="1.3" fill="#555"/><rect x="2.0" y="64.6" width="117.0" height="0.3" fill="#d8d8d8"/><rect x="2.2" y="65.4" width="22.5" height="1.7" fill="#555"/><rect x="2.2" y="70.3" width="107.5" height="1.3" fill="#777"/><rect x="2.7" y="74.4" width="3.1" height="3.1" fill="#fff" stroke="#ccc" stroke-width=".4"/><rect x="6.6" y="75.3" width="22.0" height="1.3" fill="#777"/><rect x="2.7" y="79.6" width="3.1" height="3.1" fill="#fff" stroke="#ccc" stroke-width=".4"/><rect x="6.6" y="80.5" width="22.5" height="1.3" fill="#777"/><rect x="2.7" y="84.6" width="3.1" height="3.1" fill="#fff" stroke="#ccc" stroke-width=".4"/><rect x="6.6" y="85.5" width="19.0" height="1.3" fill="#777"/><rect x="2.7" y="89.6" width="3.1" height="3.1" fill="#fff" stroke="#ccc" stroke-width=".4"/><rect x="6.6" y="90.5" width="16.5" height="1.3" fill="#777"/><rect x="2.7" y="94.5" width="3.1" height="3.1" fill="#fff" stroke="#ccc" stroke-width=".4"/><rect x="6.6" y="95.4" width="7.5" height="1.3" fill="#777"/><rect x="3.2" y="90.5" width="2.2" height="1.3" fill="#333"/><rect x="84.3" y="80.5" width="16.5" height="1.3" fill="#666"/><rect x="103.7" y="79.0" width="15.2" height="4.4" fill="#f1f1f1"/><rect x="113.0" y="80.5" width="4.6" height="1.3" fill="#999"/><rect x="44.4" y="85.5" width="8.5" height="1.3" fill="#666"/><rect x="63.8" y="84.0" width="15.8" height="4.4" fill="#f1f1f1"/><rect x="73.0" y="85.5" width="5.0" height="1.3" fill="#999"/><rect x="84.3" y="85.5" width="7.0" height="1.3" fill="#666"/><rect x="103.7" y="84.0" width="15.2" height="4.4" fill="#f1f1f1"/><rect x="113.0" y="85.5" width="4.6" height="1.3" fill="#999"/><rect x="44.4" y="95.4" width="8.5" height="1.3" fill="#666"/><rect x="63.8" y="93.9" width="15.8" height="4.4" fill="#f1f1f1"/><rect x="73.0" y="95.4" width="5.0" height="1.3" fill="#999"/><rect x="84.3" y="95.4" width="7.0" height="1.3" fill="#666"/><rect x="103.7" y="93.9" width="15.2" height="4.4" fill="#f1f1f1"/><rect x="113.0" y="95.4" width="4.6" height="1.3" fill="#999"/><rect x="2.0" y="100.5" width="117.0" height="0.3" fill="#d8d8d8"/><rect x="2.2" y="102.4" width="21.5" height="1.7" fill="#555"/><rect x="2.2" y="106.5" width="33.0" height="1.3" fill="#666"/><rect x="63.8" y="105.0" width="55.1" height="4.4" fill="#f1f1f1"/><rect x="65.3" y="106.5" width="12.5" height="1.3" fill="#666"/><rect x="113.0" y="106.5" width="1.2" height="1.3" fill="#444"/><rect x="116.0" y="106.5" width="1.6" height="1.3" fill="#444"/><rect x="2.2" y="111.5" width="35.0" height="1.3" fill="#666"/><rect x="63.8" y="110.0" width="55.1" height="4.4" fill="#f1f1f1"/><rect x="113.0" y="111.5" width="1.2" height="1.3" fill="#999"/><rect x="116.0" y="111.5" width="1.6" height="1.3" fill="#444"/></svg><div style="left:1388.8px;top:184.2px;width:132.2px;height:31.4px;background:#8cbd2e;"></div><svg style="left:1388.8px;top:215.6px" width="6.2" height="6" viewBox="0 0 6 6"><path fill="#5a7f10" d="M0,0 H6 V6 Z"/></svg><span id="t27" class="t" style="left:1454.3px;transform:translateX(-50%);top:191.19px;font-size:18.8px;line-height:18.8px;color:#fff;letter-spacing:-0.346px;margin-left:-0.173px;">Projekt</span><div style="left:1388.8px;top:334.2px;width:132.2px;height:31.4px;background:#8cbd2e;"></div><svg style="left:1388.8px;top:365.6px" width="6.2" height="6" viewBox="0 0 6 6"><path fill="#5a7f10" d="M0,0 H6 V6 Z"/></svg><span id="t28" class="t" style="left:1454.3px;transform:translateX(-50%);top:341.19px;font-size:18.8px;line-height:18.8px;color:#fff;letter-spacing:-0.186px;margin-left:-0.093px;">Weitere Info</span><div style="left:1388.8px;top:484.2px;width:132.2px;height:31.4px;background:#8cbd2e;"></div><svg style="left:1388.8px;top:515.6px" width="6.2" height="6" viewBox="0 0 6 6"><path fill="#5a7f10" d="M0,0 H6 V6 Z"/></svg><span id="t29" class="t" style="left:1454.3px;transform:translateX(-50%);top:491.19px;font-size:18.8px;line-height:18.8px;color:#fff;letter-spacing:-0.130px;margin-left:-0.065px;">Budget</span><div style="left:1388.8px;top:634.2px;width:132.2px;height:31.4px;background:#8cbd2e;"></div><svg style="left:1388.8px;top:665.6px" width="6.2" height="6" viewBox="0 0 6 6"><path fill="#5a7f10" d="M0,0 H6 V6 Z"/></svg><span id="t30" class="t" style="left:1454.3px;transform:translateX(-50%);top:641.19px;font-size:18.8px;line-height:18.8px;color:#fff;letter-spacing:-0.638px;margin-left:-0.319px;">Adressen</span><div style="left:1388.8px;top:784.2px;width:132.2px;height:31.4px;background:#8cbd2e;"></div><svg style="left:1388.8px;top:815.6px" width="6.2" height="6" viewBox="0 0 6 6"><path fill="#5a7f10" d="M0,0 H6 V6 Z"/></svg><span id="t31" class="t" style="left:1454.3px;transform:translateX(-50%);top:791.19px;font-size:18.8px;line-height:18.8px;color:#fff;letter-spacing:-0.220px;margin-left:-0.110px;">Vorgaben</span><div style="left:1039.6px;top:168.5px;width:378.2px;height:260.7px;background:#f5f5f5;border:2px solid #9c9c9c;box-shadow:3.5px 3.5px 4px rgba(0,0,0,.5);"></div><div style="left:1086.5px;top:171px;width:1px;height:256px;background:#e3e3e3;"></div><div style="left:1087.5px;top:171px;width:1px;height:256px;background:#fff;"></div><div style="left:1045px;top:389.7px;width:366px;height:35.2px;background:#c5e0f0;border:2px solid #1f97d9;"></div><div style="left:1086.5px;top:392px;width:1px;height:31px;background:#b5d3e6;"></div><span id="t32" class="t" style="left:1096.81px;top:183.13px;font-size:17.8px;line-height:17.8px;color:#1c1c1c;letter-spacing:0.107px;">Dokumentablage öffnen...</span><span id="t33" class="t" style="left:1096.81px;top:219.13px;font-size:17.8px;line-height:17.8px;color:#1c1c1c;letter-spacing:-0.317px;">Eigenschaften...</span><span id="t34" class="t" style="left:1096.81px;top:255.13px;font-size:17.8px;line-height:17.8px;color:#1c1c1c;letter-spacing:-0.067px;">In neuem Fenster öffnen...</span><span id="t35" class="t" style="left:1096.81px;top:291.13px;font-size:17.8px;line-height:17.8px;color:#1c1c1c;letter-spacing:-0.030px;">In neuem Tab öffnen...</span><span id="t36" class="t" style="left:1096.81px;top:327.13px;font-size:17.8px;line-height:17.8px;color:#1c1c1c;letter-spacing:-0.554px;">Löschen...</span><span id="t37" class="t" style="left:1096.81px;top:363.13px;font-size:17.8px;line-height:17.8px;color:#1c1c1c;letter-spacing:0.185px;">Projekt kopieren</span><span id="t38" class="t" style="left:1096.81px;top:399.13px;font-size:17.8px;line-height:17.8px;color:#1c1c1c;letter-spacing:-0.070px;">Projekt Vorschüsse umbuchen</span><div style="left:457px;top:457px;width:752.5px;height:491.5px;background:#fff;border:2px solid #d2d2d2;border-radius:10px;overflow:hidden;box-shadow:0 0 2px rgba(0,0,0,.12);"><div style="left:0px;top:0px;width:752px;height:34.5px;background:#f3f3f9;"></div></div><svg style="left:461px;top:462px" width="24" height="24" viewBox="0 0 24 24"><rect width="24" height="24" fill="#7594ab"/><rect width="6" height="24" fill="#8cc000"/>
<path d="M0,5.3 H10.6" stroke="#fff" stroke-width="1.2" fill="none"/>
<path d="M10.9,5.2 C8.6,9.5 7.6,16.5 10.2,19.2 C13.6,22.2 19.8,13.5 20.3,7.2" stroke="#fff" stroke-width="2.3" fill="none" stroke-linecap="round"/><circle cx="19.7" cy="6.6" r="1.5" fill="#fff"/></svg><span id="t39" class="t" style="left:493.41px;top:467.43px;font-size:17.8px;line-height:17.8px;color:#1c1c1c;letter-spacing:-0.090px;">Vorschüsse umbuchen</span><svg style="left:1174px;top:465px" width="20" height="20" viewBox="0 0 20 20"><path d="M2.5,2.5 L17,17 M17,2.5 L2.5,17" stroke="#111" stroke-width="1.4" fill="none"/></svg><span id="t40" class="t" style="left:487.61px;top:527.43px;font-size:17.8px;line-height:17.8px;color:#1c1c1c;letter-spacing:-0.095px;">Wählen Sie ein Projekt aus, das umgebuchte Vorschüsse erhalten soll</span><span id="t41" class="t" style="left:487.61px;top:567.83px;font-size:17.8px;line-height:17.8px;color:#1c1c1c;letter-spacing:0.165px;">Kunde</span><span id="t42" class="t" style="left:684.61px;top:567.83px;font-size:17.8px;line-height:17.8px;color:#1c1c1c;letter-spacing:-0.038px;">Comtelsat AG</span><span id="t43" class="t" style="left:487.61px;top:606.13px;font-size:17.8px;line-height:17.8px;color:#1c1c1c;letter-spacing:0.323px;">Projekt</span><span id="t44" class="t" style="left:684.61px;top:606.13px;font-size:17.8px;line-height:17.8px;color:#1c1c1c;letter-spacing:-0.693px;">COMINSTALL</span><span id="t45" class="t" style="left:487.61px;top:644.13px;font-size:17.8px;line-height:17.8px;color:#1c1c1c;letter-spacing:-0.290px;">Vorschüsse Summe</span><span id="t46" class="t" style="left:684.61px;top:644.13px;font-size:17.8px;line-height:17.8px;color:#1c1c1c;letter-spacing:-0.208px;">4’200.00</span><div style="left:751px;top:640px;width:1.6px;height:22.5px;background:#555;"></div><span id="t47" class="t" style="left:496.11px;top:704.13px;font-size:17.8px;line-height:17.8px;color:#1c1c1c;letter-spacing:-0.202px;">23.01.2026</span><span id="t48" class="t" style="left:684.61px;top:704.13px;font-size:17.8px;line-height:17.8px;color:#1c1c1c;letter-spacing:-0.344px;">Vorschuss</span><span id="t49" class="t" style="right:363.31px;top:704.13px;font-size:17.8px;line-height:17.8px;color:#1c1c1c;letter-spacing:-0.322px;margin-right:0.322px;">700.00</span><span id="t50" class="t" style="left:496.11px;top:742.13px;font-size:17.8px;line-height:17.8px;color:#1c1c1c;letter-spacing:-0.202px;">23.01.2026</span><span id="t51" class="t" style="left:684.61px;top:742.13px;font-size:17.8px;line-height:17.8px;color:#1c1c1c;letter-spacing:-0.344px;">Vorschuss</span><span id="t52" class="t" style="right:363.31px;top:742.13px;font-size:17.8px;line-height:17.8px;color:#1c1c1c;letter-spacing:-0.122px;margin-right:0.122px;">2’000.00</span><span id="t53" class="t" style="left:496.11px;top:780.13px;font-size:17.8px;line-height:17.8px;color:#1c1c1c;letter-spacing:-0.202px;">23.01.2026</span><span id="t54" class="t" style="left:684.61px;top:780.13px;font-size:17.8px;line-height:17.8px;color:#1c1c1c;letter-spacing:-0.344px;">Vorschuss</span><span id="t55" class="t" style="right:363.31px;top:780.13px;font-size:17.8px;line-height:17.8px;color:#1c1c1c;letter-spacing:-0.236px;margin-right:0.236px;">1’500.00</span><span id="t56" class="t" style="left:487.61px;top:840.13px;font-size:17.8px;line-height:17.8px;color:#1c1c1c;letter-spacing:0.375px;">Zielprojekt</span><div class="fld" style="left:684.5px;top:832.5px;width:493.5px;height:29px;"></div><div style="left:1149.3px;top:836px;width:1.5px;height:22px;background:#b5b5b5;"></div><svg style="left:1154px;top:840px" width="18" height="14" viewBox="0 0 18 14"><path d="M2.6,3.2 L9,9.6 L15.4,3.2" fill="none" stroke="#000" stroke-width="2.7" stroke-linejoin="miter"/></svg><span id="t57" class="t" style="left:693.31px;top:840.13px;font-size:17.8px;line-height:17.8px;color:#1c1c1c;letter-spacing:-0.536px;">1783 | COM-SSUP</span><div style="left:925px;top:876px;width:120px;height:42px;border:2.5px solid #c6c6c6;background:linear-gradient(#f6f6f6,#e9e9e9 50%,#dcdcdc);"></div><span id="t58" class="t" style="left:972.61px;top:890.43px;font-size:17.8px;line-height:17.8px;color:#1c1c1c;letter-spacing:-0.623px;">OK</span><div style="left:1054px;top:876px;width:123px;height:42px;border:1px solid #b3b3b3;background:#fbfbfb;"></div><span id="t59" class="t" style="left:1071.61px;top:890.43px;font-size:17.8px;line-height:17.8px;color:#1c1c1c;letter-spacing:0.196px;">Abbrechen</span><svg style="left:1360.5px;top:399.5px" width="14" height="21" viewBox="0 0 14 21"><path d="M1,1 L1,17.2 L4.9,13.6 L7.6,19.6 L10,18.5 L7.3,12.7 L12.3,12.5 Z" fill="#fff" stroke="#000" stroke-width="1.1" stroke-linejoin="round"/></svg><svg style="left:1020.3px;top:897.7px" width="14" height="21" viewBox="0 0 14 21"><path d="M1,1 L1,17.2 L4.9,13.6 L7.6,19.6 L10,18.5 L7.3,12.7 L12.3,12.5 Z" fill="#fff" stroke="#000" stroke-width="1.1" stroke-linejoin="round"/></svg><svg style="left:0;top:0" width="1534" height="960" viewBox="0 0 1534 960"><rect x="1052.3" y="118.2" width="66.5" height="52" fill="none" stroke="#fa0f14" stroke-width="1.2"/><path d="M1077,406.5 L966,484" stroke="#f5161c" stroke-width="1.2" fill="none"/><path d="M960.5,488 L968.6,478.3 L973,484.6 Z" fill="#f5161c"/></svg><div style="left:0px;top:0px;width:1534px;height:960px;border:2px solid #d2d2d2;border-radius:9px;background:none;"></div>
</div></body></html>
